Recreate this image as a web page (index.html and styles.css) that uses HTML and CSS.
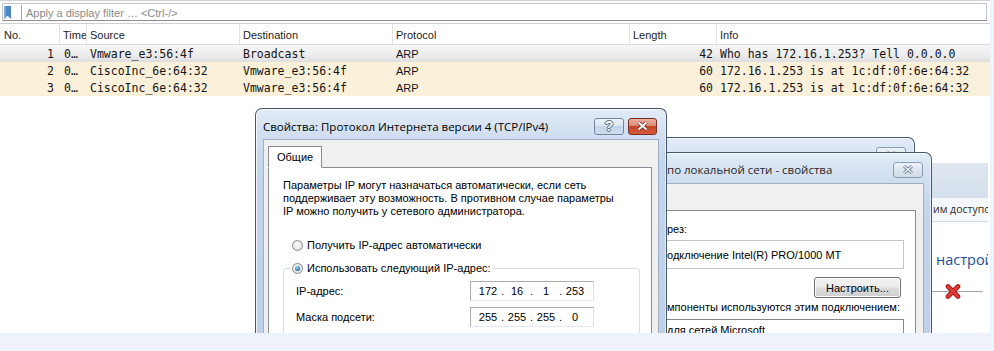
FILE: index.html
```html
<!DOCTYPE html>
<html lang="ru">
<head>
<meta charset="utf-8">
<title>Wireshark · ARP</title>
<link rel="stylesheet" href="styles.css">
</head>
<body>
<div class="screen">
  <div class="filterbar">
    <div class="filter">
      <svg class="bm" width="7" height="13" viewBox="0 0 7 13"><path d="M0 0H7V13L3.5 9.8L0 13Z" fill="#4f86c6"/><path d="M0 0H2V11.5L0 13Z" fill="#7aa6da"/></svg>
      <span class="fsep"></span>
      <span class="fph">Apply a display filter … &lt;Ctrl-/&gt;</span>
    </div>
  </div>

  <div class="plist">
    <div class="row head">
      <div class="c">No.</div><div class="c">Time</div><div class="c">Source</div><div class="c">Destination</div><div class="c">Protocol</div><div class="c">Length</div><div class="c">Info</div>
    </div>
    <div class="row pk sel">
      <div class="c num">1</div><div class="c tm">0…</div><div class="c">Vmware_e3:56:4f</div><div class="c">Broadcast</div><div class="c proto">ARP</div><div class="c num len">42</div><div class="c">Who has 172.16.1.253? Tell 0.0.0.0</div>
    </div>
    <div class="row pk arp">
      <div class="c num">2</div><div class="c tm">0…</div><div class="c">CiscoInc_6e:64:32</div><div class="c">Vmware_e3:56:4f</div><div class="c proto">ARP</div><div class="c num len">60</div><div class="c">172.16.1.253 is at 1c:df:0f:6e:64:32</div>
    </div>
    <div class="row pk arp">
      <div class="c num">3</div><div class="c tm">0…</div><div class="c">CiscoInc_6e:64:32</div><div class="c">Vmware_e3:56:4f</div><div class="c proto">ARP</div><div class="c num len">60</div><div class="c">172.16.1.253 is at 1c:df:0f:6e:64:32</div>
    </div>
  </div>

  <!-- Network and Sharing Center (behind, only its right edge shows) -->
  <div class="nc">
    <div class="nc-band"></div>
    <div class="nc-row"><span class="sp sp-nc1"></span>им доступом</div>
    <div class="nc-head"><span class="sp sp-nc2"></span>настройка подключений</div>
    <div class="nc-map">
      <svg class="redx" width="16" height="15" viewBox="0 0 16 15"><path d="M3 2.5L13 12.5M13 2.5L3 12.5" stroke="#9c1616" stroke-width="4.6" stroke-linecap="round"/><path d="M3 2.5L13 12.5M13 2.5L3 12.5" stroke="#e03a34" stroke-width="3" stroke-linecap="round"/></svg>
    </div>
  </div>

  <!-- status dialog (behind) -->
  <div class="win back">
    <div class="wtitle"><span class="tt"></span><span class="wbtn cls inactive"><svg width="12" height="9" viewBox="0 0 12 9"><path d="M2 1L10 8M10 1L2 8" stroke="#7c8a9c" stroke-width="3"/><path d="M2 1L10 8M10 1L2 8" stroke="#eef2f7" stroke-width="1.3"/></svg></span></div>
  </div>

  <!-- LAN properties (partly covered) -->
  <div class="win lan">
    <div class="wtitle inact"><span class="tt"><span class="sp sp-title"></span>по локальной сети - свойства</span><span class="wbtn cls inactive"><svg width="12" height="9" viewBox="0 0 12 9"><path d="M2 1L10 8M10 1L2 8" stroke="#6f7e92" stroke-width="3"/><path d="M2 1L10 8M10 1L2 8" stroke="#eef2f7" stroke-width="1.3"/></svg></span></div>
    <div class="client">
      <div class="tabs"></div>
      <div class="panel lanpanel">
        <div class="lline lconn"><span class="sp sp-a"></span>рез:</div>
        <div class="adapter"><span class="sp sp-b"></span>одключение Intel(R) PRO/1000 MT</div>
        <div class="btnrow"><span class="btn">Настроить...</span></div>
        <div class="lline lcomp"><span class="sp sp-a"></span>мпоненты используются этим подключением:</div>
        <div class="complist"><span class="sp sp-b"></span>для сетей Microsoft</div>
      </div>
    </div>
  </div>

  <!-- IPv4 properties (active) -->
  <div class="win ipv4">
    <div class="wtitle"><span class="tt">Свойства: Протокол Интернета версии 4 (TCP/IPv4)</span><span class="wbtn hlp">?</span><span class="wbtn cls red"><svg width="13" height="10" viewBox="0 0 13 10"><path d="M2.5 1.5L10.5 8.5M10.5 1.5L2.5 8.5" stroke="#6a2418" stroke-width="3.6"/><path d="M2.5 1.5L10.5 8.5M10.5 1.5L2.5 8.5" stroke="#fff" stroke-width="2"/></svg></span></div>
    <div class="client">
      <div class="tabs"><span class="tab on">Общие</span></div>
      <div class="panel ippanel">
        <p class="intro">Параметры IP могут назначаться автоматически, если сеть<br>поддерживает эту возможность. В противном случае параметры<br>IP можно получить у сетевого администратора.</p>
        <div class="radio-row"><span class="radio"></span><span>Получить IP-адрес автоматически</span></div>
        <fieldset class="group">
          <legend class="radio-row"><span class="radio checked"></span><span>Использовать следующий IP-адрес:</span></legend>
          <div class="field"><span class="flabel">IP-адрес:</span><span class="ipbox"><span class="oct">172</span><span class="dot">.</span><span class="oct">16</span><span class="dot">.</span><span class="oct">1</span><span class="dot">.</span><span class="oct">253</span></span></div>
          <div class="field"><span class="flabel">Маска подсети:</span><span class="ipbox"><span class="oct">255</span><span class="dot">.</span><span class="oct">255</span><span class="dot">.</span><span class="oct">255</span><span class="dot">.</span><span class="oct">0</span></span></div>
        </fieldset>
      </div>
    </div>
  </div>
</div>
</body>
</html>
```
FILE: styles.css
```css
* { box-sizing: border-box; margin: 0; padding: 0; }
body { background: #eef2fa; width: 994px; height: 351px; overflow: hidden; font-family: "Liberation Sans", Arial, sans-serif; }
.screen { position: relative; width: 990px; height: 333px; background: #fff; overflow: hidden; }

/* filter bar */
.filterbar { height: 24px; padding: 2px 3px 0 2px; border-top: 1px solid #d2d2d2; border-bottom: 1px solid #cfcfcf; }
.filter { height: 18px; border: 1px solid #c4c4c4; border-bottom-color: #8e8e8e; display: flex; align-items: center; }
.bm { margin-left: 1px; }
.fsep { width: 1px; height: 15px; background: #a8a8a8; margin-left: 10px; }
.fph { margin-left: 4px; font-size: 11px; color: #8a8a8a; white-space: nowrap; padding-top: 1px; }

/* packet list */
.row { display: grid; grid-template-columns: 60px 27px 153px 153px 237px 87px 1fr; height: 17px; align-items: center; }
.head { height: 21px; border-bottom: 1px solid #dcdcdc; font-size: 11px; color: #1e1e1e; align-items: stretch; }
.head .c { border-right: 1px solid #e4e4e4; display: flex; align-items: center; padding: 2px 0 0 3px; overflow: hidden; white-space: nowrap; }
.head .c:first-child { padding-left: 4px; }
.head .c:last-child { border-right: none; }
.pk { font-family: "DejaVu Sans Mono", "Liberation Mono", monospace; font-size: 11.5px; color: #141414; }
.pk .c { padding-left: 3px; white-space: nowrap; overflow: hidden; }
.pk .num { text-align: right; padding-right: 6px; }
.pk .len { padding-right: 4px; }
.pk .tm { padding-left: 4px; }
.pk .proto { font-family: "Liberation Sans", Arial, sans-serif; font-size: 11px; }
.sel { background: linear-gradient(180deg, #f7f7f7 0%, #ececec 60%, #dedede 100%); }
.arp { background: #fbf0da; }

/* generic windows */
.win { position: absolute; border: 1px solid #46566b; border-bottom: none; border-radius: 7px 7px 0 0; padding: 0 7px;
  background: linear-gradient(180deg, #e2ecf7 0, #d0def0 26px, #c3d5ea 60px, #bdd0e8 100%);
  box-shadow: inset 1px 1px 0 rgba(255,255,255,.75), inset -1px 0 0 rgba(255,255,255,.55); }
.wtitle { height: 30px; padding-top: 4px; display: flex; align-items: center; font-family: "Open Sans", "Noto Sans", sans-serif; font-size: 11.5px; color: #000; white-space: nowrap; }
.wtitle .tt { flex: 1; overflow: hidden; }
.wtitle.inact { color: #262626; }
.wbtn { height: 17px; border-radius: 3px; display: flex; align-items: center; justify-content: center; }
.hlp { width: 30px; border: 1px solid #74879f; background: linear-gradient(180deg, #eef3fa 0%, #dae5f2 45%, #c4d4e8 50%, #cfdcee 100%);
  color: #fff; font-size: 14px; font-family: "Liberation Sans", sans-serif; font-weight: bold; line-height: 1;
  text-shadow: 0 0 1px #4d5d72, 0 0 1px #4d5d72, 1px 0 0 #6b7b90, -1px 0 0 #6b7b90, 0 1px 0 #6b7b90, 0 -1px 0 #6b7b90; }
.cls { width: 30px; margin-left: 4px; margin-right: 2px; }
.red { width: 29px; border: 1px solid #7d2e21; background: linear-gradient(180deg, #eab2a4 0%, #dc8b76 45%, #c64328 50%, #d55b3f 100%); }
.inactive { border: 1px solid #8b9db4; background: linear-gradient(180deg, #edf2f8 0%, #dce5f0 50%, #d0dcea 100%); height: 16px; }

.client { background: #f0f0f0; border: 1px solid #9db0c8; height: 100%; display: flex; flex-direction: column; font-size: 11px; color: #000; }
.tabs { display: flex; padding-left: 4px; height: 27px; align-items: flex-end; flex: none; }
.tab { height: 22px; padding: 0 8px; border: 1px solid #898c95; border-bottom: none; display: flex; align-items: center; margin-bottom: -1px; position: relative; }
.tab.on { background: #fff; border-bottom: 1px solid #fff; z-index: 1; }
.panel { flex: 1; background: #fff; border: 1px solid #898c95; }
.sp { display: inline-block; vertical-align: top; height: 1px; }

/* stacking order of the windows */
.nc { z-index: 1; }
.back { z-index: 2; }
.lan { z-index: 3; }
.ipv4 { z-index: 4; }

/* IPv4 dialog */
.ipv4 { left: 255px; top: 108px; width: 412px; height: 250px; }
.ipv4 .client { height: 215px; }
.ipv4 .tabs { height: 27px; }
.ippanel { margin: 0 6px 0 4px; padding: 11px 11px 0 14px; }
.intro { line-height: 13px; white-space: nowrap; }
.radio-row { display: flex; align-items: center; height: 16px; }
.ippanel > .radio-row { margin-top: 19px; padding-left: 9px; }
.radio { width: 11px; height: 11px; border-radius: 50%; border: 1px solid #8a8c8e; background: radial-gradient(circle at 45% 40%, #fdfdfd 0, #e6e6e6 60%, #cfcfcf 100%); margin-right: 4px; display: inline-flex; align-items: center; justify-content: center; }
.radio.checked::after { content: ""; width: 5px; height: 5px; border-radius: 50%; background: radial-gradient(circle at 40% 35%, #9fe0f6 0, #2d86b9 55%, #1b4f7a 100%); }
.group { margin: 7px 0 0 0; border: 1px solid #d5dfe5; border-radius: 3px; padding: 0 0 8px 8px; min-width: 0; width: 357px; }
.group legend { margin-left: -2px; padding: 0 2px; }
.field { display: flex; align-items: center; height: 20px; margin-top: 6px; }
.field:first-of-type { margin-top: 5px; }
.flabel { width: 178px; padding-left: 4px; }
.ipbox { width: 124px; height: 20px; border: 1px solid #abadb3; border-right-color: #dbdfe6; border-bottom-color: #e3e9ef; display: flex; align-items: center; padding-left: 5px; }
.oct { width: 24px; text-align: center; }
.dot { width: 5px; text-align: center; }

/* LAN dialog */
.lan { left: 560px; top: 152px; width: 372px; height: 200px; }
.lan .wtitle { padding-top: 3px; }
.lan .cls { margin-right: 1px; }
.lan .client { height: 170px; }
.lan .tabs { height: 26px; }
.sp-title { width: 99px; }
.lanpanel { margin: 0 7px 0 4px; padding: 12px 11px 0 8px; }
.lline { height: 13px; line-height: 13px; white-space: nowrap; }
.sp-a { width: 85px; }
.sp-b { width: 84px; }
.adapter { margin-top: 4px; height: 29px; border: 1px solid #c3c7cd; display: flex; align-items: center; white-space: nowrap; }
.btnrow { display: flex; justify-content: flex-end; margin-top: 8px; padding-right: 3px; }
.btn { width: 87px; height: 21px; border: 1px solid #707070; border-radius: 3px; background: linear-gradient(180deg, #f2f2f2 0%, #ebebeb 48%, #dddddd 52%, #cfcfcf 100%); display: flex; align-items: center; justify-content: center; box-shadow: inset 0 0 0 1px #fcfcfc; }
.lcomp { margin-top: 3px; }
.complist { margin-top: 5px; height: 30px; border: 1px solid #828790; padding-top: 4px; line-height: 13px; white-space: nowrap; }

/* status dialog behind */
.back { left: 545px; top: 137px; width: 370px; height: 200px; }
.back .cls { margin-right: 1px; }

/* network and sharing center */
.nc { position: absolute; left: 640px; top: 100px; width: 348px; height: 233px; background: #fff; overflow: hidden; font-family: "Open Sans", "Noto Sans", sans-serif; }
.nc-band { margin-top: 63px; height: 35px; background: linear-gradient(180deg, #dfe7f1 0%, #d4dfeb 100%); }
.nc-row { height: 24px; line-height: 23px; background: #f5f8fb; border-bottom: 1px solid #d3dce6; font-size: 10.5px; color: #2a2a2a; white-space: nowrap; }
.sp-nc1 { width: 293px; }
.nc-head { margin-top: 28px; height: 20px; line-height: 20px; font-size: 14.5px; color: #234f97; white-space: nowrap; }
.sp-nc2 { width: 296px; }
.nc-map { margin-top: 14px; width: 343px; height: 15px; display: flex; background: linear-gradient(180deg, transparent 7px, #a6a6a6 7px, #a6a6a6 8px, transparent 8px); }
.redx { margin-left: 305px; }
```
